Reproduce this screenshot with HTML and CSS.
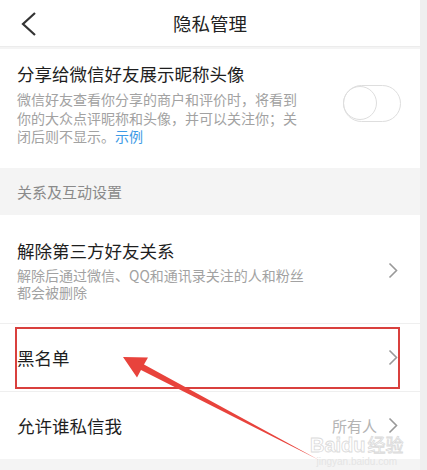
FILE: index.html
```html
<!DOCTYPE html>
<html lang="zh-CN">
    <head>
        <meta name="viewport" content="width=device-width, initial-scale=1.0">
        <title>隐私管理</title>
        <link rel="stylesheet" href="styles.css">
    </head>
    <body>
        <div class="page">
            <div class="main">
                <div class="top">
                    <svg class="back" width="18" height="26" viewBox="0 0 18 26">
                        <polyline points="15,2 3,13 15,24" fill="none" stroke="#333" stroke-width="2.2"/>
                    </svg>
                    <span class="top-title">隐私管理</span>
                </div>

                <div class="block share">
                    <div class="share-text">
                        <div class="item-title">分享给微信好友展示昵称头像</div>
                        <div class="desc">微信好友查看你分享的商户和评价时，将看到你的大众点评昵称和头像，并可以关注你；关闭后则不显示。<span class="link">示例</span></div>
                    </div>
                    <div class="switch"><div class="knob"></div></div>
                </div>

                <div class="group">关系及互动设置</div>

                <div class="block row first">
                    <div>
                        <div class="item-title">解除第三方好友关系</div>
                        <div class="desc narrow">解除后通过微信、QQ和通讯录关注的人和粉丝都会被删除</div>
                    </div>
                    <svg class="arrow-r" width="10" height="17" viewBox="0 0 10 17">
                        <polyline points="1.5,1.5 8.5,8.5 1.5,15.5" fill="none" stroke="#999" stroke-width="1.6"/>
                    </svg>
                </div>

                <div class="block row mid">
                    <div class="item-title">黑名单</div>
                    <svg class="arrow-r" width="10" height="17" viewBox="0 0 10 17">
                        <polyline points="1.5,1.5 8.5,8.5 1.5,15.5" fill="none" stroke="#999" stroke-width="1.6"/>
                    </svg>
                    <div class="mark"></div>
                </div>

                <div class="block row last">
                    <div class="item-title">允许谁私信我</div>
                    <div class="right">
                        <span class="value">所有人</span>
                        <svg class="arrow-r" width="10" height="17" viewBox="0 0 10 17">
                            <polyline points="1.5,1.5 8.5,8.5 1.5,15.5" fill="none" stroke="#999" stroke-width="1.6"/>
                        </svg>
                    </div>
                    <div class="wm">
                        <div class="wm-big">Baidu<span class="wm-cn">经验</span></div>
                        <div class="wm-small">jingyan.baidu.com</div>
                    </div>
                </div>

                <svg class="pointer" width="420" height="470" viewBox="0 0 420 470">
                    <polygon points="123,357 148,357.5 144,364.5 319,460 141,370 137,377.5" fill="#e8433c"/>
                </svg>
            </div>
            <div class="side"></div>
        </div>
    </body>
</html>
```

FILE: styles.css
```css
* {
    box-sizing: border-box;
}
body {
    margin: 0;
    font-family: "Noto Sans CJK SC", "Noto Sans", sans-serif;
    background-color: #f3f3f3;
}
.page {
    display: flex;
    height: 470px;
    overflow: hidden;
}
.main {
    position: relative;
    width: 420px;
    background-color: #f4f4f4;
}
.side {
    flex: 1;
    background-color: #efefef;
}
.top {
    height: 47px;
    background-color: #fff;
    display: flex;
    align-items: center;
    justify-content: center;
    position: relative;
    border-bottom: 1px solid #ececec;
    margin-bottom: 2px;
}
.back {
    position: absolute;
    left: 20px;
    top: 11px;
}
.top-title {
    font-size: 18.5px;
    color: #222;
}
.block {
    background-color: #fff;
}
.share {
    height: 119px;
    padding: 13px 0 0 17px;
    display: flex;
    align-items: flex-start;
}
.share-text {
    width: 290px;
}
.item-title {
    font-size: 17.5px;
    line-height: 24px;
    color: #1e1e1e;
}
.desc {
    margin-top: 4px;
    font-size: 14px;
    line-height: 18.5px;
    color: #a2a2a2;
}
.desc.narrow {
    width: 292px;
    line-height: 17.5px;
}
.link {
    color: #3d9ae6;
}
.switch {
    margin: 23px 0 0 36px;
    width: 58px;
    height: 37px;
    border: 1.5px solid #dedede;
    border-radius: 19px;
}
.knob {
    width: 34px;
    height: 34px;
    border-radius: 50%;
    border: 1.5px solid #dedede;
    margin-left: -1px;
}
.group {
    height: 47px;
    padding-left: 17px;
    display: flex;
    align-items: center;
    font-size: 15px;
    color: #8a8a8a;
}
.row {
    display: flex;
    align-items: center;
    justify-content: space-between;
    padding: 0 22px 0 17px;
    position: relative;
}
.row.first {
    height: 109px;
    padding-top: 2px;
    border-bottom: 1px solid #efefef;
}
.row.mid {
    height: 68px;
    border-bottom: 1px solid #efefef;
}
.row.last {
    height: 67px;
}
.right {
    display: flex;
    align-items: center;
    gap: 11px;
}
.value {
    font-size: 15px;
    color: #b4b4b4;
}
.mark {
    position: absolute;
    left: 15px;
    top: 3px;
    width: 385px;
    height: 62px;
    border: 2.5px solid #d9403d;
}
.wm {
    position: absolute;
    left: 310px;
    top: 43px;
    text-align: center;
    line-height: 1;
}
.wm-big {
    font-family: "Liberation Sans", sans-serif;
    font-size: 20px;
    font-weight: bold;
    color: rgba(255, 255, 255, 0.75);
    -webkit-text-stroke: 0.8px #dadada;
}
.wm-cn {
    font-family: "Noto Sans CJK SC", sans-serif;
    font-size: 18px;
    font-weight: normal;
    margin-left: 2px;
}
.wm-small {
    font-family: "Liberation Sans", sans-serif;
    font-size: 10px;
    color: #e4e4e4;
    margin-top: 2px;
}
.pointer {
    position: absolute;
    left: 0;
    top: 0;
    pointer-events: none;
}
```
